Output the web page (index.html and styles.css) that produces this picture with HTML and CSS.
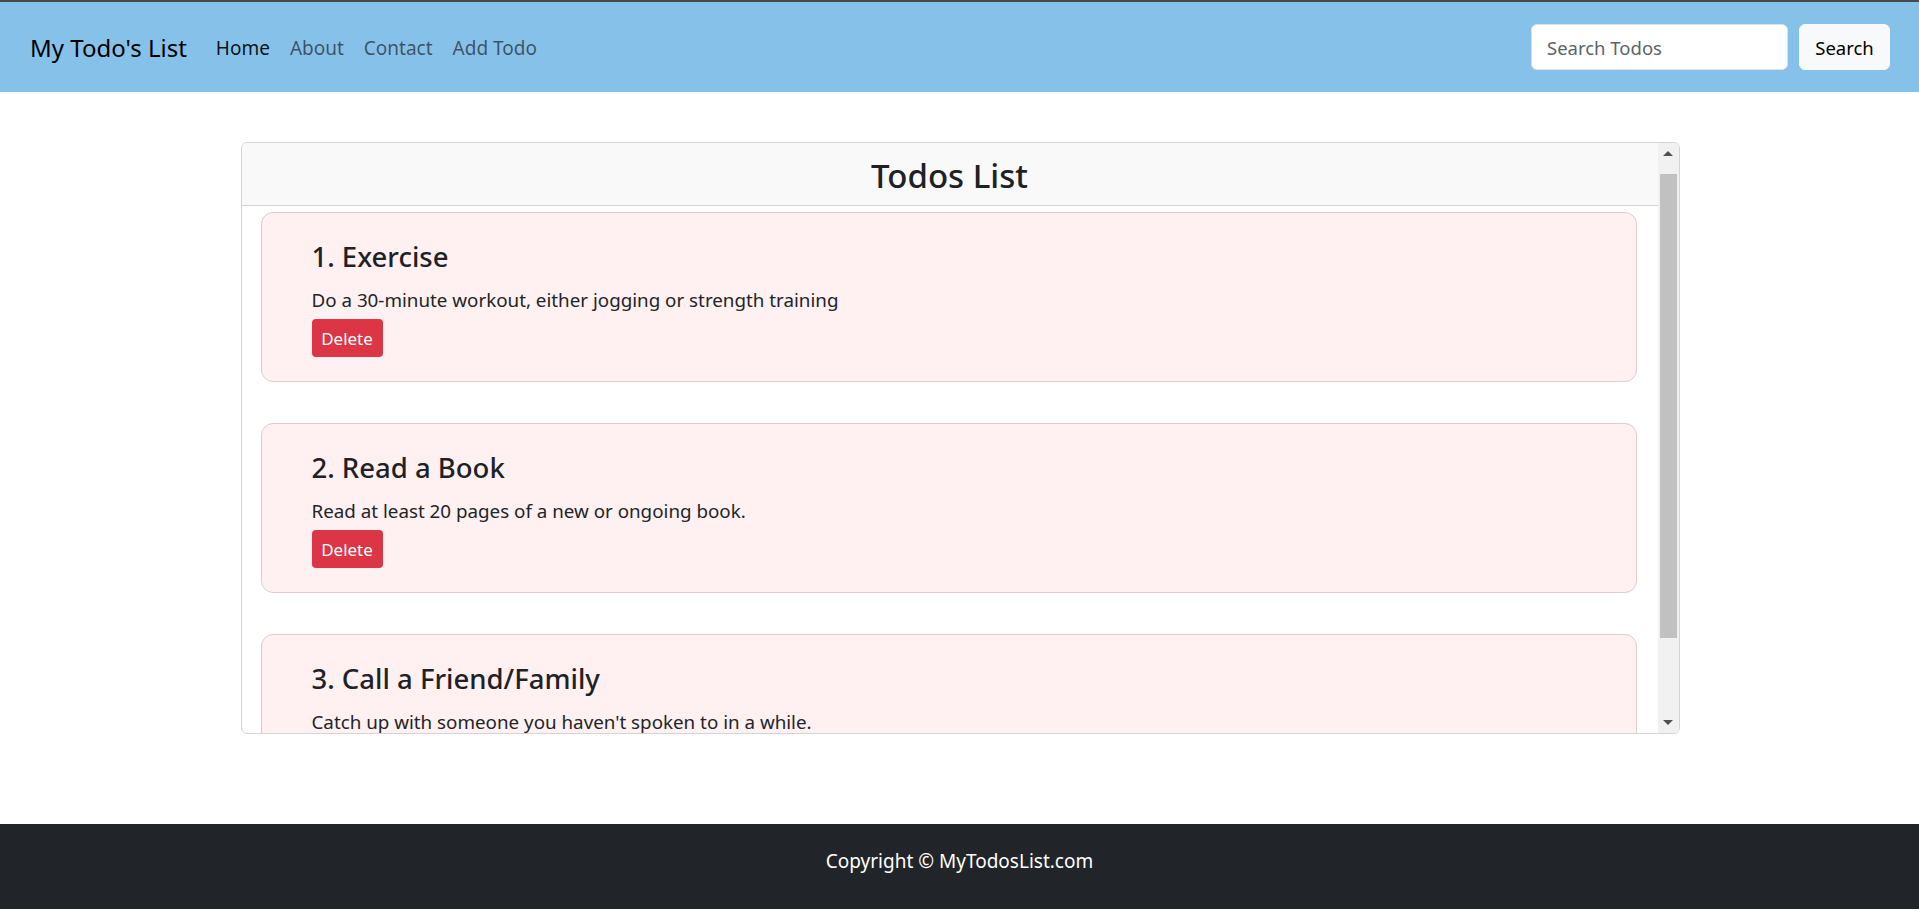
FILE: index.html
```html
<!DOCTYPE html>
<html lang="en">
<head>
<meta charset="utf-8">
<title>My Todo's List</title>
<link rel="stylesheet" href="styles.css">
</head>
<body>
<nav class="navbar">
  <a class="brand" href="#">My Todo's List</a>
  <ul class="nav-links">
    <li><a class="nav-link active" href="#">Home</a></li>
    <li><a class="nav-link" href="#">About</a></li>
    <li><a class="nav-link" href="#">Contact</a></li>
    <li><a class="nav-link" href="#">Add Todo</a></li>
  </ul>
  <form class="search">
    <input class="search-input" type="search" placeholder="Search Todos">
    <button class="search-btn" type="button">Search</button>
  </form>
</nav>
<main class="main">
  <section class="list-card">
    <div class="list-body">
      <header class="list-header"><h2 class="list-title">Todos List</h2></header>
      <div class="list-items">
        <article class="todo">
          <h3 class="todo-title">1. Exercise</h3>
          <p class="todo-desc">Do a 30-minute workout, either jogging or strength training</p>
          <button class="btn-delete" type="button">Delete</button>
        </article>
        <article class="todo">
          <h3 class="todo-title">2. Read a Book</h3>
          <p class="todo-desc">Read at least 20 pages of a new or ongoing book.</p>
          <button class="btn-delete" type="button">Delete</button>
        </article>
        <article class="todo">
          <h3 class="todo-title">3. Call a Friend/Family</h3>
          <p class="todo-desc">Catch up with someone you haven't spoken to in a while.</p>
          <button class="btn-delete" type="button">Delete</button>
        </article>
      </div>
    </div>
    <div class="scrollbar">
      <div class="sb-btn sb-up"></div>
      <div class="sb-track"><div class="sb-thumb"></div></div>
      <div class="sb-btn sb-down"></div>
    </div>
  </section>
</main>
<footer class="footer">Copyright © MyTodosList.com</footer>
</body>
</html>
```
FILE: styles.css
```css
* { box-sizing: border-box; }
html, body { margin: 0; padding: 0; }
body {
  font-family: "Noto Sans", "Open Sans", sans-serif;
  color: #212529;
  background: #fff;
  height: 909px;
  display: flex;
  flex-direction: column;
}
.navbar {
  height: 92px;
  flex: none;
  border-top: 2px solid #474a4d;
  background: #86c1ea;
  display: flex;
  align-items: center;
  padding: 1px 29px 0 30px;
}
.brand {
  font-size: 24px;
  color: #000;
  text-decoration: none;
  margin-right: 29px;
}
.nav-links {
  list-style: none;
  margin: 0;
  padding: 0;
  display: flex;
  gap: 20px;
  flex: 1;
}
.nav-link {
  font-size: 19px;
  color: rgba(0,0,0,0.58);
  text-decoration: none;
}
.nav-link.active { color: rgba(0,0,0,0.92); }
.search { display: flex; gap: 11px; margin-top: -1px; }
.search-input {
  width: 257px;
  height: 46px;
  border: 1px solid #dee2e6;
  border-radius: 6px;
  padding: 0 15px;
  font-family: inherit;
  font-size: 18.5px;
  color: #212529;
  background: #fff;
}
.search-input::placeholder { color: #5c646b; }
.search-btn {
  width: 91px;
  height: 46px;
  border: 1px solid #f8f9fa;
  border-radius: 6px;
  background: #f8f9fa;
  font-family: inherit;
  font-size: 18.5px;
  color: #000;
  padding: 0;
}
.main {
  flex: 1;
  padding-top: 50px;
  display: flex;
  justify-content: center;
}
.list-card {
  width: 1439px;
  height: 592px;
  margin-left: 1px;
  border: 1px solid #d4d4d4;
  border-radius: 6px;
  display: flex;
  overflow: hidden;
}
.list-body {
  flex: 1;
  display: flex;
  flex-direction: column;
  overflow: hidden;
}
.list-header {
  height: 63px;
  flex: none;
  background: #f9f9f9;
  border-bottom: 1px solid #d4d4d4;
  display: flex;
  align-items: center;
  justify-content: center;
}
.list-title {
  margin: 0;
  font-size: 33px;
  font-weight: 500;
  line-height: 1;
  padding-top: 2px;
  color: #1e2226;
}
.list-items {
  padding: 6px 21px 0 19px;
  display: flex;
  flex-direction: column;
  gap: 41px;
}
.todo {
  flex: none;
  height: 170px;
  background: #fff0f1;
  border: 1px solid #e1cbcf;
  border-radius: 12px;
  padding: 27px 50px 0;
}
.todo-title {
  margin: 0;
  font-size: 27.5px;
  font-weight: 500;
  line-height: 1.2;
  color: #1e2226;
}
.todo-desc {
  margin: 15px 0 6px;
  font-size: 18.8px;
  line-height: 1.35;
}
.btn-delete {
  display: block;
  width: 71px;
  height: 38px;
  background: #dc3545;
  color: #fff;
  border: 0;
  border-radius: 4px;
  font-family: inherit;
  font-size: 17px;
  padding: 0;
}
.scrollbar {
  width: 21px;
  flex: none;
  background: #f1f1f1;
  display: flex;
  flex-direction: column;
}
.sb-btn {
  height: 21px;
  flex: none;
  display: flex;
  align-items: center;
  justify-content: center;
}
.sb-up::before, .sb-down::before {
  content: "";
  width: 0;
  height: 0;
  border-left: 5px solid transparent;
  border-right: 5px solid transparent;
}
.sb-up::before { border-bottom: 5px solid #505050; }
.sb-down::before { border-top: 5px solid #505050; }
.sb-track {
  flex: 1;
  padding: 10px 2px 0;
}
.sb-thumb {
  height: 464px;
  background: #c1c1c1;
}
.footer {
  height: 85px;
  flex: none;
  background: #212529;
  color: #fff;
  font-size: 19px;
  display: flex;
  align-items: center;
  justify-content: center;
  padding-bottom: 12px;
}
```
